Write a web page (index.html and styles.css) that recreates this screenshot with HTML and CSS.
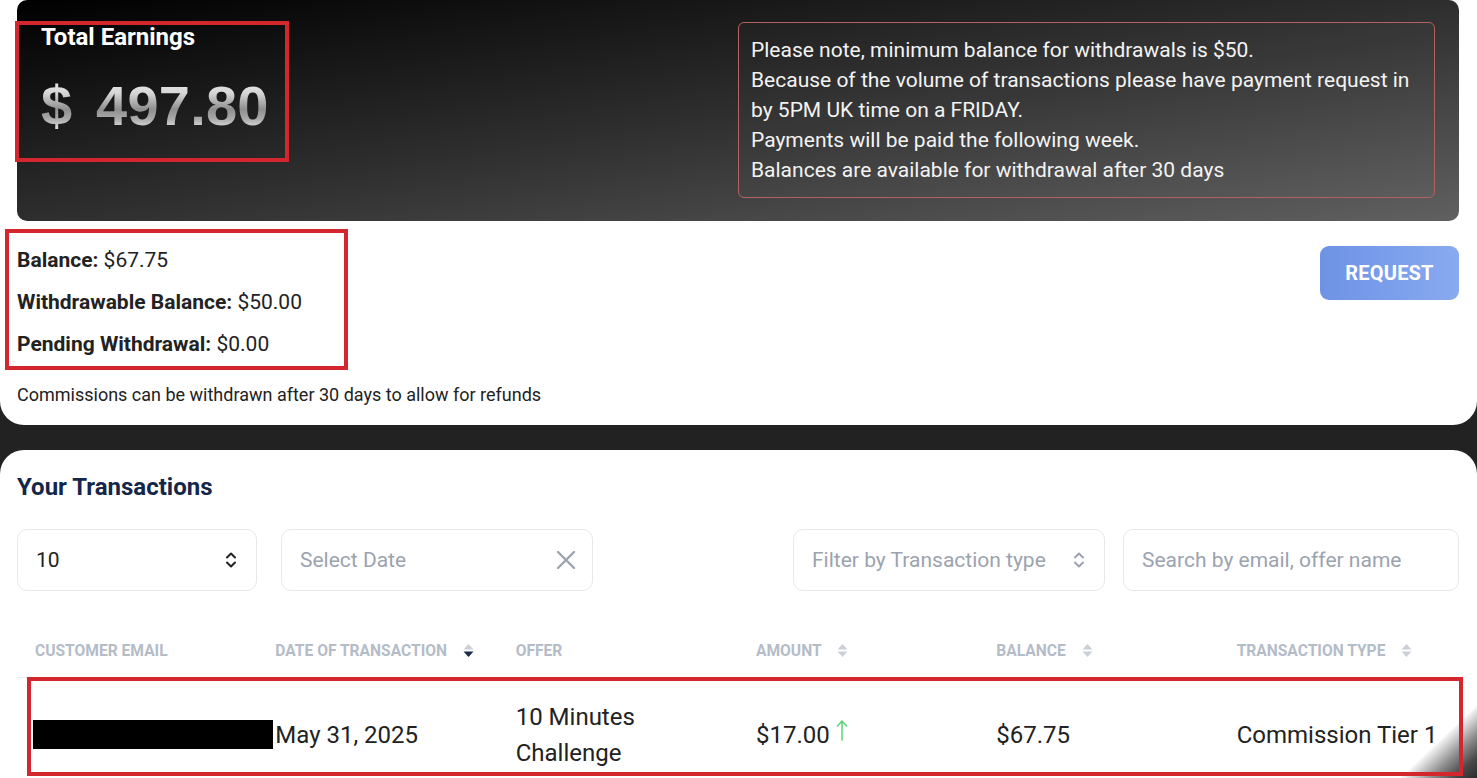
FILE: index.html
```html
<!DOCTYPE html>
<html lang="en">
<head>
<meta charset="utf-8">
<title>Earnings</title>
<link rel="stylesheet" href="styles.css">
</head>
<body>
<section class="top-card">
  <div class="hero">
    <div class="earnings">
      <div class="earn-title">Total Earnings</div>
      <div class="earn-amount"><span class="cur">$</span> 497.80</div>
    </div>
    <div class="notice">
      Please note, minimum balance for withdrawals is $50.<br>
      Because of the volume of transactions please have payment request in by 5PM UK time on a FRIDAY.<br>
      Payments will be paid the following week.<br>
      Balances are available for withdrawal after 30 days
    </div>
  </div>
  <div class="balance-row">
    <div class="balances">
      <p><b>Balance:</b> $67.75</p>
      <p><b>Withdrawable Balance:</b> $50.00</p>
      <p><b>Pending Withdrawal:</b> $0.00</p>
    </div>
    <button class="request">REQUEST</button>
  </div>
  <p class="note">Commissions can be withdrawn after 30 days to allow for refunds</p>
</section>

<section class="tx-card">
  <h2 class="tx-title">Your Transactions</h2>
  <div class="filters">
    <div class="filter-group">
      <div class="field field-size">
        <span class="val">10</span>
        <svg class="chev" width="14" height="22" viewBox="0 0 14 22"><path d="M3 8.5 L7 4.5 L11 8.5 M3 13.5 L7 17.5 L11 13.5" fill="none" stroke="#222" stroke-width="2" stroke-linecap="round" stroke-linejoin="round"/></svg>
      </div>
      <div class="field field-date">
        <span class="ph">Select Date</span>
        <svg width="20" height="20" viewBox="0 0 20 20"><path d="M2 2 L18 18 M18 2 L2 18" stroke="#9ca3af" stroke-width="2.4" stroke-linecap="round"/></svg>
      </div>
    </div>
    <div class="filter-group right">
      <div class="field field-type">
        <span class="ph">Filter by Transaction type</span>
        <svg class="chev" width="14" height="22" viewBox="0 0 14 22"><path d="M3 8.5 L7 4.5 L11 8.5 M3 13.5 L7 17.5 L11 13.5" fill="none" stroke="#9ca3af" stroke-width="2" stroke-linecap="round" stroke-linejoin="round"/></svg>
      </div>
      <div class="field field-search">
        <span class="ph">Search by email, offer name</span>
      </div>
    </div>
  </div>

  <table class="tx-table">
    <thead>
      <tr>
        <th>Customer Email</th>
        <th>Date of Transaction <svg class="sort" width="11" height="17" viewBox="0 0 11 17"><polygon points="0.5,7.5 5.5,2 10.5,7.5" fill="#cbd0d8"/><polygon points="0.5,9.5 5.5,15 10.5,9.5" fill="#1c2a4a"/></svg></th>
        <th>Offer</th>
        <th>Amount <svg class="sort" width="11" height="17" viewBox="0 0 11 17"><polygon points="0.5,7.5 5.5,2 10.5,7.5" fill="#cbd0d8"/><polygon points="0.5,9.5 5.5,15 10.5,9.5" fill="#cbd0d8"/></svg></th>
        <th>Balance <svg class="sort" width="11" height="17" viewBox="0 0 11 17"><polygon points="0.5,7.5 5.5,2 10.5,7.5" fill="#cbd0d8"/><polygon points="0.5,9.5 5.5,15 10.5,9.5" fill="#cbd0d8"/></svg></th>
        <th>Transaction Type <svg class="sort" width="11" height="17" viewBox="0 0 11 17"><polygon points="0.5,7.5 5.5,2 10.5,7.5" fill="#cbd0d8"/><polygon points="0.5,9.5 5.5,15 10.5,9.5" fill="#cbd0d8"/></svg></th>
      </tr>
    </thead>
    <tbody>
      <tr>
        <td class="email"><span class="redact"></span></td>
        <td>May 31, 2025</td>
        <td>10 Minutes Challenge</td>
        <td>$17.00<svg class="up" width="12" height="22" viewBox="0 0 12 22"><path d="M6 21 L6 2 M1.5 7 L6 2 L10.5 7" fill="none" stroke="#5cd37a" stroke-width="1.5" stroke-linecap="round" stroke-linejoin="round"/></svg></td>
        <td>$67.75</td>
        <td>Commission Tier 1</td>
      </tr>
    </tbody>
  </table>
</section>

<div class="annot annot-earn"></div>
<div class="annot annot-bal"></div>
<div class="annot annot-row"></div>
<div class="curl"></div>
</body>
</html>
```

FILE: styles.css
```css
* { box-sizing: border-box; }

html, body {
  margin: 0;
  padding: 0;
}

body {
  background: #222222;
  font-family: Roboto, "Liberation Sans", sans-serif;
  color: #222;
  position: relative;
  overflow: hidden;
  height: 778px;
}

/* ---------- top card ---------- */
.top-card {
  background: #fff;
  border-radius: 0 0 24px 24px;
  padding: 0 18px 18px 17px;
}

.hero {
  display: flex;
  justify-content: space-between;
  align-items: flex-start;
  padding: 22px 24px 23px 24px;
  border-radius: 10px;
  background: linear-gradient(to bottom right, #000 0%, #2e2e2e 50%, #606060 100%);
}

.earn-title {
  color: #fff;
  font-weight: 700;
  font-size: 24px;
  line-height: 30px;
}

.earn-amount {
  margin-top: 22px;
  font-family: "Liberation Sans", Arial, sans-serif;
  font-weight: 700;
  font-size: 56px;
  line-height: 64px;
  letter-spacing: 0.2px;
  background: linear-gradient(to bottom, #f3f3f3 0%, #d6d6d6 30%, #8f8f8f 55%, #a9a9a9 70%, #e9e9e9 88%, #bdbdbd 100%);
  -webkit-background-clip: text;
  background-clip: text;
  color: transparent;
}

.earn-amount .cur {
  margin-right: 8px;
}

.notice {
  width: 697px;
  border: 1px solid #b4625f;
  border-radius: 6px;
  background: rgba(255, 255, 255, 0.02);
  padding: 12px;
  color: #f3f3f3;
  font-size: 21px;
  line-height: 30px;
}

.balance-row {
  display: flex;
  justify-content: space-between;
  align-items: flex-start;
  margin-top: 18px;
}

.balances p {
  margin: 0;
  font-size: 21px;
  line-height: 42px;
  color: #222;
}

.balances b {
  font-weight: 700;
}

.request {
  margin-top: 7px;
  width: 139px;
  height: 54px;
  border: 0;
  border-radius: 9px;
  background: linear-gradient(to right, #6e93e5, #88aaf0);
  color: #fff;
  font-family: Roboto, "Liberation Sans", sans-serif;
  font-weight: 700;
  font-size: 20px;
  letter-spacing: 0.2px;
}

.note {
  margin: 18px 0 0;
  font-size: 18px;
  line-height: 24px;
  color: #222;
}

/* ---------- transactions card ---------- */
.tx-card {
  margin-top: 25px;
  background: #fff;
  border-radius: 24px 24px 0 0;
  padding: 22px 18px 0 17px;
}

.tx-title {
  margin: 0;
  font-size: 24px;
  line-height: 30px;
  font-weight: 700;
  color: #15264b;
}

.filters {
  margin-top: 27px;
  display: flex;
  justify-content: space-between;
}

.filter-group {
  display: flex;
  gap: 24px;
}

.filter-group.right {
  gap: 18px;
}

.field {
  height: 62px;
  border: 1px solid #e6e8ec;
  border-radius: 10px;
  padding: 0 18px;
  display: flex;
  align-items: center;
  justify-content: space-between;
  font-size: 21px;
}

.field-size { width: 240px; }
.field-date { width: 312px; padding-right: 16px; }
.field-type { width: 312px; }
.field-search { width: 336px; }

.val { color: #222; }
.ph { color: #9ca3af; }

/* ---------- table ---------- */
.tx-table {
  width: 100%;
  margin-top: 31px;
  border-collapse: collapse;
  table-layout: fixed;
}

.tx-table th {
  height: 55px;
  padding: 4px 0 0 18px;
  text-align: left;
  font-size: 15.6px;
  font-weight: 700;
  text-transform: uppercase;
  color: #b4bcc8;
  border-bottom: 1px solid #edf0f3;
  white-space: nowrap;
}

.sort {
  vertical-align: -3px;
  margin-left: 12px;
}

.tx-table td {
  padding: 21px 0 21px 18px;
  font-size: 24px;
  line-height: 36px;
  color: #222;
  vertical-align: middle;
}

.tx-table td.email {
  padding-left: 16px;
}

.redact {
  display: block;
  width: 240px;
  height: 29px;
  background: #000;
}

.up {
  margin-left: 6px;
  vertical-align: 2px;
}

/* ---------- overlays ---------- */
.annot {
  position: absolute;
  border: 4px solid #d3262d;
  pointer-events: none;
  z-index: 3;
}

.annot-earn { left: 15px; top: 21px; width: 274px; height: 141px; }
.annot-bal  { left: 5px;  top: 229px; width: 343px; height: 141px; }
.annot-row  { left: 27px; top: 677px; width: 1436px; height: 99px; }

.curl {
  position: fixed;
  right: 0;
  bottom: 0;
  width: 77px;
  height: 73px;
  z-index: 2;
  background: linear-gradient(to bottom right, rgba(255,255,255,0) 50%, #f4f4f4 51%, #cfcfcf 58%, #8d8d8d 70%, #4a4a4a 85%, #2a2a2a 100%);
}
```
